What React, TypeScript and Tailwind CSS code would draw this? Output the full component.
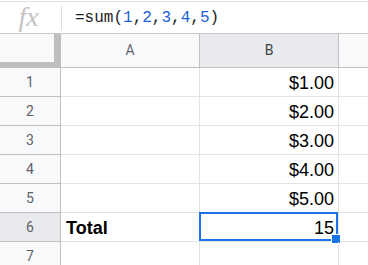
const ROWS: { n: number; a?: string; b?: string }[] = [
  { n: 1, b: "$1.00" },
  { n: 2, b: "$2.00" },
  { n: 3, b: "$3.00" },
  { n: 4, b: "$4.00" },
  { n: 5, b: "$5.00" },
  { n: 6, a: "Total", b: "15" },
  { n: 7 },
];

function FormulaBar() {
  const args = ["1", "2", "3", "4", "5"];
  return (
    <div className="mt-px flex h-[33px] items-center border-y border-t-[#e3e3e3] border-b-[#c7c7c7] bg-white">
      <div className="flex w-[61px] items-center justify-center pb-[2px] pr-[4px]">
        <span className="font-['Liberation_Serif',serif] text-[28px] italic leading-none text-[#c4c4c4]">fx</span>
      </div>
      <div className="h-[24px] w-px bg-[#dadce0]" />
      <div className="pl-[13px] font-['Liberation_Mono',monospace] text-[16px] leading-none text-[#202124]">
        =sum(
        {args.map((a, i) => (
          <span key={a}>
            <span className="text-[#1a5fd6]">{a}</span>
            {i < args.length - 1 ? "," : ""}
          </span>
        ))}
        )
      </div>
    </div>
  );
}

function HeaderRow() {
  return (
    <div className="flex h-[34px] border-b border-[#c0c0c0] font-['Roboto',sans-serif] text-[14px] text-[#5f6368]">
      <div className="h-[34px] w-[61px] shrink-0 border-r-[7px] border-b-[6px] border-[#bfbfbf] bg-[#f8f9fa]" />
      <div className="flex w-[139px] shrink-0 items-center justify-center border-r border-[#c0c0c0] bg-[#f8f9fa]">A</div>
      <div className="flex w-[139px] shrink-0 items-center justify-center border-r border-[#c0c0c0] bg-[#e8eaed] text-[#3c4043]">B</div>
      <div className="flex-1 bg-[#f8f9fa]" />
    </div>
  );
}

function DataRow({ n, a, b }: { n: number; a?: string; b?: string }) {
  const selected = n === 6;
  return (
    <div className="flex h-[29px]">
      <div
        className={`flex w-[61px] shrink-0 items-center justify-center border-r border-b border-[#c0c0c0] font-['Roboto',sans-serif] text-[14px] text-[#5f6368] ${
          selected ? "bg-[#e8eaed]" : "bg-[#f8f9fa]"
        }`}
      >
        {n}
      </div>
      <div className="flex w-[139px] shrink-0 items-end border-r border-b border-[#e2e3e3] pb-[3px] pl-[5px] font-['Liberation_Sans',Arial,sans-serif] text-[18px] font-bold leading-[20px] text-black">
        {a}
      </div>
      <div className="relative flex w-[139px] shrink-0 items-end justify-end border-r border-b border-[#e2e3e3] pr-[4px] pb-[3px] font-['Liberation_Sans',Arial,sans-serif] text-[18px] leading-[20px] text-black">
        {b}
        {selected && (
          <div className="absolute -top-px -left-px right-0 bottom-0 border-2 border-[#1a73e8]">
            <div className="absolute -right-[5px] -bottom-[5px] h-[10px] w-[10px] border border-white bg-[#1a73e8]" />
          </div>
        )}
      </div>
      <div className="flex-1 border-b border-[#e2e3e3]" />
    </div>
  );
}

export default function App() {
  return (
    <div className="h-[265px] w-[368px] overflow-hidden bg-white">
      <FormulaBar />
      <HeaderRow />
      {ROWS.map((r) => (
        <DataRow key={r.n} {...r} />
      ))}
    </div>
  );
}
